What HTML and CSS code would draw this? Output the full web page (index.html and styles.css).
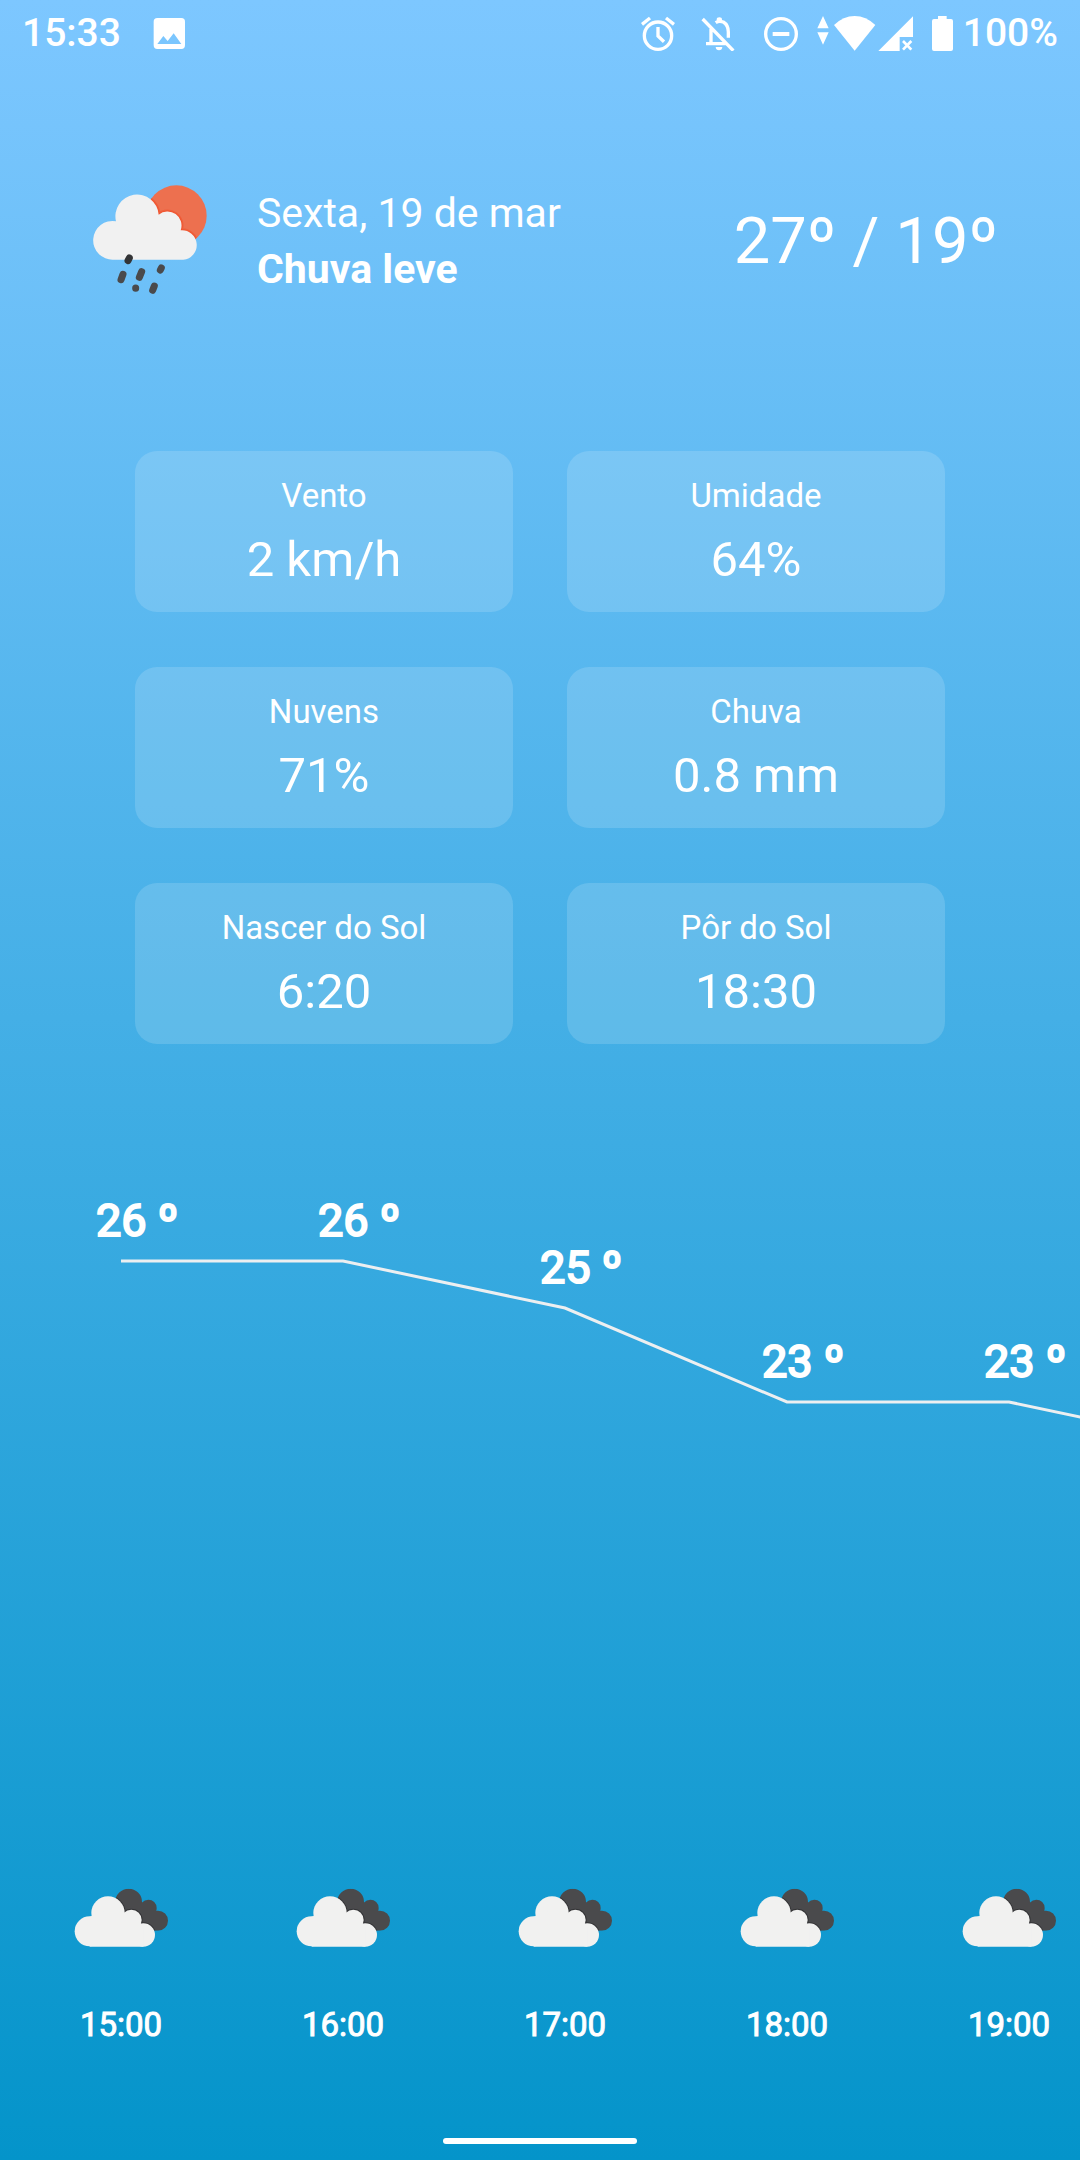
FILE: index.html
```html
<!DOCTYPE html>
<html lang="pt-BR">
<head>
<meta charset="utf-8">
<meta name="viewport" content="width=device-width, initial-scale=1">
<title>Previsão do tempo</title>
<link rel="stylesheet" href="styles.css">
</head>
<body>
<svg class="defs" aria-hidden="true">
  <defs>
    <clipPath id="dark-cloud">
      <circle cx="209" cy="126" r="40"/><circle cx="268" cy="144" r="25"/><circle cx="297" cy="182" r="30"/>
      <path d="M180 130L245 125L285 150L297 212H230Z"/>
    </clipPath>
    <g id="light-cloud">
      <circle cx="92" cy="214" r="45"/><circle cx="147" cy="159" r="50"/><circle cx="217" cy="180" r="31"/><circle cx="253" cy="225" r="35"/>
      <path d="M92 170L147 150L217 165L253 200V260H92Z"/>
    </g>
    <symbol id="cloudy" viewBox="45 84 285 177">
      <g clip-path="url(#dark-cloud)">
        <path fill="#4a4a4c" d="M160 84H330V220H160Z"/>
        <use href="#light-cloud" fill="none" stroke="#2b2b2d" stroke-width="6" stroke-opacity=".7"/>
      </g>
      <use href="#light-cloud" fill="#f1f1f0"/>
    </symbol>
  </defs>
</svg>

<div class="status">
  <span class="clock">15:33</span>
  <svg class="i-image" viewBox="456 42 96 108" aria-hidden="true"><path fill="#fff" fill-rule="evenodd" d="M469 51H541Q552 51 552 62V132Q552 144 541 144H469Q458 144 458 132V62Q458 51 469 51ZM469 129H541L518 97L500 120L487 105Z"/></svg>
  <div class="tray">
    <svg class="i-alarm" viewBox="63 42 102 108" fill="none" stroke="#fff" stroke-width="10" aria-hidden="true"><circle cx="114" cy="104" r="41"/><path d="M66 70L90 51M138 51L162 70M114 78V105L132 122"/></svg>
    <svg class="i-bell" viewBox="243 42 102 108" fill="none" stroke="#fff" stroke-width="10" aria-hidden="true"><path d="M248 54L340 149M273 84V128M258 128H322M287 65Q297 58 310 63Q325 72 325 93V110"/><path fill="#fff" stroke="none" d="M290 63V56Q290 49 298 49Q306 49 306 56V63ZM287 138H307Q306 148 297 148Q288 148 287 138Z"/></svg>
    <svg class="i-dnd" viewBox="432 42 102 108" fill="none" stroke="#fff" aria-hidden="true"><circle cx="483" cy="99" r="46" stroke-width="10"/><path stroke-width="12" d="M458 99H508"/></svg>
    <svg class="i-data" viewBox="51 42 36 108" fill="#fff" aria-hidden="true"><path d="M69 45L86 82H52ZM52 94H86L69 131Z"/></svg>
    <svg class="i-wifi" viewBox="102 42 126 108" fill="#fff" aria-hidden="true"><path d="M164 149L102 72Q130 45 164 45Q198 45 226 72Z"/></svg>
    <svg class="i-signal" viewBox="234 42 105 108" aria-hidden="true"><path fill="#fff" d="M339 46V108H299V150H235Z"/><path stroke="#fff" stroke-width="8" d="M309 120L334 146M334 120L309 146"/></svg>
    <svg class="i-battery" viewBox="396 42 63 108" fill="#fff" aria-hidden="true"><path d="M414 45H440V54H453Q459 54 459 60V144Q459 150 453 150H402Q396 150 396 144V60Q396 54 402 54H414Z"/></svg>
    <span class="charge">100%</span>
  </div>
</div>

<main>
  <header class="today">
    <svg class="today-icon" viewBox="66 70 342 342" role="img" aria-label="Chuva leve">
      <defs>
        <clipPath id="sun"><circle cx="316" cy="165" r="91"/></clipPath>
        <path id="rain-cloud" d="M127 297A58 58 0 1 1 135 182A65 65 0 1 1 263 162A42 42 0 0 1 329 209A44 44 0 1 1 337 297Z"/>
      </defs>
      <circle cx="316" cy="165" r="91" fill="#ed704f"/>
      <g clip-path="url(#sun)" fill="none" stroke="#f05530">
        <use href="#rain-cloud" stroke-width="12" stroke-opacity=".6"/>
        <use href="#rain-cloud" stroke-width="6"/>
      </g>
      <use href="#rain-cloud" fill="#f1f1f1"/>
      <g stroke="#4a4a4c" stroke-width="21" stroke-linecap="round">
        <path d="M156 341L150 357M212 333L205 350M271 322L268 328M194 382V383M250 376L245 389"/>
        <path stroke="#333436" d="M175 292L171 300"/>
      </g>
    </svg>
    <div class="today-text">
      <p>Sexta, 19 de mar</p>
      <p class="condition">Chuva leve</p>
    </div>
    <p class="range">27º / 19º</p>
  </header>

  <dl class="details">
    <div class="card"><dt>Vento</dt><dd>2 km/h</dd></div>
    <div class="card"><dt>Umidade</dt><dd>64%</dd></div>
    <div class="card"><dt>Nuvens</dt><dd>71%</dd></div>
    <div class="card"><dt>Chuva</dt><dd>0.8 mm</dd></div>
    <div class="card"><dt>Nascer do Sol</dt><dd>6:20</dd></div>
    <div class="card"><dt>Pôr do Sol</dt><dd>18:30</dd></div>
  </dl>

  <section class="hourly" aria-label="Previsão por hora">
    <svg class="chart" viewBox="0 0 1110 700">
      <polyline points="111,81 333,81 555,128 777,222 999,222 1221,269" fill="none" stroke="#eceff1" stroke-width="3"/>
      <g class="temps">
        <text x="86" y="56">26 º</text>
        <text x="308" y="56">26 º</text>
        <text x="530" y="103">25 º</text>
        <text x="752" y="197">23 º</text>
        <text x="974" y="197">23 º</text>
      </g>
    </svg>
    <ol class="hours">
      <li><svg aria-hidden="true"><use href="#cloudy"/></svg><time>15:00</time></li>
      <li><svg aria-hidden="true"><use href="#cloudy"/></svg><time>16:00</time></li>
      <li><svg aria-hidden="true"><use href="#cloudy"/></svg><time>17:00</time></li>
      <li><svg aria-hidden="true"><use href="#cloudy"/></svg><time>18:00</time></li>
      <li><svg aria-hidden="true"><use href="#cloudy"/></svg><time>19:00</time></li>
    </ol>
  </section>
</main>
<div class="home-bar"></div>
</body>
</html>
```

FILE: styles.css
```css
* { box-sizing: border-box; margin: 0; padding: 0; }

body {
  display: flex;
  flex-direction: column;
  min-height: 100vh;
  background: linear-gradient(#7dc7ff, #0494ca);
  color: #fff;
  font-family: Roboto, "Noto Sans", sans-serif;
}

svg { display: block; flex: none; }
.defs { position: absolute; width: 0; height: 0; }

/* System status bar */
.status {
  display: flex;
  align-items: center;
  height: 66px;
  padding: 0 22px;
  font-size: 39px;
  font-weight: 500;
  line-height: 44px;
}
.status svg { height: 36px; }
.i-image { width: 32px; margin-left: 32px; }
.tray { display: flex; align-items: center; margin-left: auto; }
.i-alarm { width: 34px; }
.i-bell { width: 34px; margin-left: 26px; }
.i-dnd { width: 34px; margin-left: 29px; }
.i-data { width: 12px; margin-left: 19px; }
.i-wifi { width: 42px; margin-left: 5px; }
.i-signal { width: 35px; margin-left: 2px; }
.i-battery { width: 21px; margin-left: 19px; }
.charge { margin-left: 10px; }

/* Current day */
.today {
  display: flex;
  align-items: center;
  padding: 118px 82px 0 93px;
  font-size: 41px;
  line-height: 56px;
}
.today-icon { width: 114px; height: 114px; }
.today-text { margin-left: 50px; }
.condition { font-weight: 700; }
.range { margin-left: auto; font-size: 65px; line-height: 80px; }

/* Detail cards */
.details {
  display: grid;
  grid-template-columns: 1fr 1fr;
  gap: 55px 54px;
  padding: 153px 12.5% 0;
}
.card {
  display: flex;
  flex-direction: column;
  gap: 10px;
  padding: 21px 16px 22px;
  border-radius: 22px;
  background: rgba(255, 255, 255, .15);
  text-align: center;
}
.card dt { font-size: 33px; line-height: 48px; }
.card dd { font-size: 49px; line-height: 60px; }

/* Hourly forecast, scrolls sideways */
.hourly {
  overflow-x: auto;
  scrollbar-width: none;
  padding: 136px 0 0 10px;
}
.chart { width: 1110px; height: 700px; }
.temps text {
  fill: #fff;
  stroke: #fff;
  stroke-width: 2px;
  font-size: 45px;
}
.hours {
  display: grid;
  grid-template-columns: repeat(5, 222px);
  padding-top: 8px;
  list-style: none;
}
.hours li {
  display: flex;
  flex-direction: column;
  align-items: center;
  gap: 54px;
}
.hours svg { width: 95px; height: 59px; }
.hours time {
  font-size: 33px;
  line-height: 48px;
  -webkit-text-stroke: 1px #fff;
}

.home-bar {
  width: 194px;
  height: 6px;
  margin: auto auto 16px;
  border-radius: 3px;
  background: #fff;
}
```
